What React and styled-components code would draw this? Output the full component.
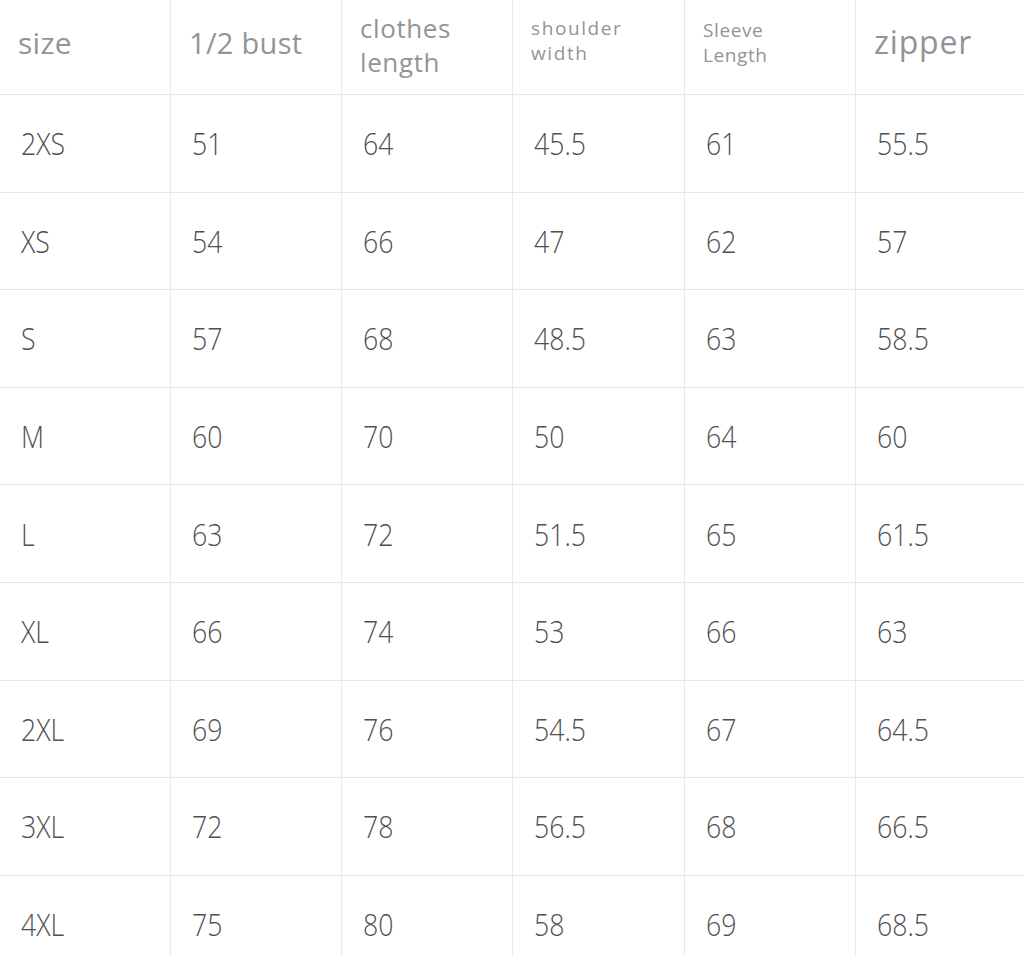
import React from "react";
import styled, { createGlobalStyle } from "styled-components";

const GlobalStyle = createGlobalStyle`
  html, body {
    margin: 0;
    padding: 0;
    background: #fff;
    overflow: hidden;
  }
  body {
    font-family: "Open Sans", "Noto Sans", sans-serif;
  }
`;

const columns = [
  { label: ["size"], size: 30, spacing: 0.3, shift: 5 },
  { label: ["1/2 bust"], size: 29, spacing: 0.3, shift: 5 },
  { label: ["clothes", "length"], size: 26, spacing: 0.6, lh: 34, shift: 2 },
  { label: ["shoulder", "width"], size: 19, spacing: 1.6, lh: 25, shift: 6 },
  { label: ["Sleeve", "Length"], size: 19, spacing: 0.6, lh: 25, shift: 4 },
  { label: ["zipper"], size: 32, spacing: 0.8, shift: 6 },
];

const rows = [
  ["2XS", "51", "64", "45.5", "61", "55.5"],
  ["XS", "54", "66", "47", "62", "57"],
  ["S", "57", "68", "48.5", "63", "58.5"],
  ["M", "60", "70", "50", "64", "60"],
  ["L", "63", "72", "51.5", "65", "61.5"],
  ["XL", "66", "74", "53", "66", "63"],
  ["2XL", "69", "76", "54.5", "67", "64.5"],
  ["3XL", "72", "78", "56.5", "68", "66.5"],
  ["4XL", "75", "80", "58", "69", "68.5"],
];

const App = () => {
  return (
    <>
      <GlobalStyle />
      <Table>
        <HeaderRow>
          {columns.map((col, i) => (
            <HeadCell key={i} last={i === columns.length - 1} shift={col.shift}>
              <HeadLabel size={col.size} spacing={col.spacing} lh={col.lh}>
                {col.label.map((line) => (
                  <span key={line}>{line}</span>
                ))}
              </HeadLabel>
            </HeadCell>
          ))}
        </HeaderRow>
        {rows.map((row) => (
          <Row key={row[0]}>
            {row.map((value, i) => (
              <Cell key={i} last={i === row.length - 1}>
                <Value>{value}</Value>
              </Cell>
            ))}
          </Row>
        ))}
      </Table>
    </>
  );
};

export default App;

const Table = styled.div`
  width: 1024px;
  display: flex;
  flex-direction: column;
`;

const HeaderRow = styled.div`
  display: grid;
  grid-template-columns: 171px 171px 171px 172px 171px 168px;
  height: 95px;
  box-sizing: border-box;
  border-bottom: 1px solid #e7e8eb;
`;

const Row = styled.div`
  display: grid;
  grid-template-columns: 171px 171px 171px 172px 171px 168px;
  height: 97.6px;
  box-sizing: border-box;
  border-bottom: 1px solid #e7e8eb;
`;

const HeadCell = styled.div`
  display: flex;
  align-items: center;
  padding: 0 0 ${({ shift }) => shift * 2}px 18px;
  box-sizing: border-box;
  border-right: ${({ last }) => (last ? "none" : "1px solid #e7e8eb")};
`;

const HeadLabel = styled.div`
  display: flex;
  flex-direction: column;
  color: #939497;
  font-family: "Open Sans", sans-serif;
  font-weight: 400;
  font-size: ${({ size }) => size}px;
  letter-spacing: ${({ spacing }) => spacing}px;
  line-height: ${({ lh }) => (lh ? `${lh}px` : "normal")};
`;

const Cell = styled.div`
  display: flex;
  align-items: center;
  padding-left: 21px;
  box-sizing: border-box;
  border-right: ${({ last }) => (last ? "none" : "1px solid #e7e8eb")};
`;

const Value = styled.span`
  display: inline-block;
  color: #4f5053;
  font-family: "Open Sans", sans-serif;
  font-weight: 300;
  font-size: 31px;
  transform: scaleX(0.86);
  transform-origin: left center;
`;
